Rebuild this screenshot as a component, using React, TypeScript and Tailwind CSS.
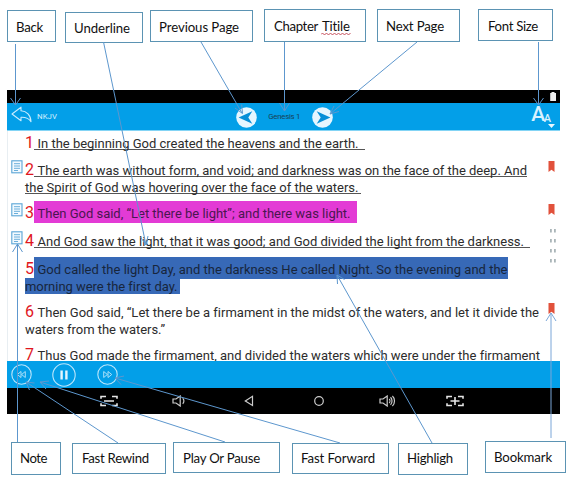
import { useLayoutEffect, useRef, useState } from 'react';
import type { ReactNode } from 'react';

/* Single line of text whose letter spacing is tuned to fill the given width. */
function FitText({ text, width, className = '' }: { text: string; width: number; className?: string }) {
  const ref = useRef<HTMLSpanElement>(null);
  const [spacing, setSpacing] = useState(0);
  useLayoutEffect(() => {
    if (ref.current) {
      const natural = ref.current.getBoundingClientRect().width;
      setSpacing((width - natural) / text.length);
    }
  }, [text, width]);
  return (
    <span ref={ref} className={`inline-block whitespace-nowrap ${className}`} style={{ letterSpacing: spacing }}>
      {text}
    </span>
  );
}

function Callout({ text, width, box, wavyText }: { text: string; width: number; box: string; wavyText?: string }) {
  return (
    <div className={`shrink-0 border border-[#5b93b3] bg-white font-[Lato,sans-serif] text-[13.2px] leading-[18px] text-[#111] ${box}`}>
      <FitText text={text} width={width} />
      {wavyText && (
        <>
          <span className="inline-block w-[4px]" />
          <span className="relative inline-block">
            <FitText text={wavyText} width={28} />
            <svg className="absolute -left-px top-[15px]" width="30" height="4" viewBox="0 0 30 4" fill="none">
              <path d="M0 2.5l1.5-1.5 2 2 2-2 2 2 2-2 2 2 2-2 2 2 2-2 2 2 2-2 2 2 2-2 2 2 2-2" stroke="#c0404d" strokeWidth=".9" />
            </svg>
          </span>
        </>
      )}
    </div>
  );
}

function NoteIcon() {
  return (
    <svg width="12" height="14" viewBox="0 0 12 14" fill="none" stroke="#5aa5d6">
      <rect x=".8" y=".8" width="10.2" height="12" fill="#f3faff" strokeWidth="1.1" />
      <path d="M3 3.7h6M3 6h6M3 8.3h6M3 10.5h4" strokeWidth=".9" />
    </svg>
  );
}

function BookmarkIcon() {
  return (
    <svg width="7" height="11" viewBox="0 0 7 11">
      <path d="M.5 0h6v11l-3-2.2-3 2.2z" fill="#e1513b" />
    </svg>
  );
}

type LineProps = { n?: number; text: string; width: number; body: string };

function Line({ n, text, width, body }: LineProps) {
  return (
    <div className="flex h-[17px] items-start">
      {n && <span className="w-[9px] shrink-0 text-[16px] leading-[16px] text-[#e0161e]">{n}</span>}
      <span className={`block shrink-0 whitespace-nowrap ${n ? 'pl-[3.5px]' : ''} ${body}`}>
        <FitText text={text} width={width} />
      </span>
    </div>
  );
}

function Verse({ lines, note, mark, gap }: { lines: LineProps[]; note?: boolean; mark?: boolean; gap: string }) {
  return (
    <div className={`flex ${gap}`}>
      <div className="-mt-[2px] h-4 w-[18px] shrink-0 pl-[3.5px]">{note && <NoteIcon />}</div>
      <div className="w-[520px] shrink-0">
        {lines.map((l) => (
          <Line key={l.text} {...l} />
        ))}
      </div>
      <div className="-mt-px h-3 w-[10px] shrink-0 pl-[3px]">{mark && <BookmarkIcon />}</div>
    </div>
  );
}

const rule = 'h-[15px] border-b border-[#555]';

function Reader() {
  return (
    <main className="relative h-[230px] overflow-hidden border-l border-[#e8eef2] bg-white pt-1 font-[Roboto,sans-serif] text-[13px] leading-[17px] text-[#2c2c2c]">
      <div className="-ml-px">
        <Verse gap="mb-[10px]" lines={[{ n: 1, text: 'In the beginning God created the heavens and the earth.', width: 321, body: `w-[331px] ${rule}` }]} />
        <Verse
          gap="mb-[9px]"
          note
          mark
          lines={[
            { n: 2, text: 'The earth was without form, and void; and darkness was on the face of the deep. And', width: 489.5, body: `w-[493px] ${rule}` },
            { text: 'the Spirit of God was hovering over the face of the waters.', width: 333.5, body: `w-[336px] ${rule}` },
          ]}
        />
        <Verse gap="mb-[11px]" note mark lines={[{ n: 3, text: 'Then God said, “Let there be light”; and there was light.', width: 313, body: 'w-[323px] h-[22px] -mt-1 pt-1 bg-[#e33bd5] text-[#4a1650]' }]} />
        <Verse gap="mb-[11px]" note lines={[{ n: 4, text: 'And God saw the light, that it was good; and God divided the light from the darkness.', width: 486.5, body: `w-[496px] ${rule}` }]} />
        <Verse
          gap="mb-[9px]"
          lines={[
            { n: 5, text: 'God called the light Day, and the darkness He called Night. So the evening and the', width: 470, body: 'w-[473.5px] h-[22px] -mt-1 pt-1 bg-[#3769b7] text-[#17263c]' },
            { text: 'morning were the first day.', width: 152, body: 'w-[155px] h-[16px] bg-[#3769b7] text-[#17263c]' },
          ]}
        />
        <Verse
          gap="mb-[9px]"
          mark
          lines={[
            { n: 6, text: 'Then God said, “Let there be a firmament in the midst of the waters, and let it divide the', width: 501, body: '' },
            { text: 'waters from the waters.”', width: 140, body: '' },
          ]}
        />
        <Verse gap="" lines={[{ n: 7, text: 'Thus God made the firmament, and divided the waters which were under the firmament', width: 501.5, body: '' }]} />
      </div>
      {/* drag handle that floats over the right edge */}
      <svg className="absolute left-[541px] top-[97px]" width="8" height="36" viewBox="0 0 8 36" fill="#aab5b8">
        {[1, 11, 21, 31].map((y) => (
          <g key={y}>
            <rect x="1" y={y} width="1.8" height="3.5" />
            <rect x="5" y={y} width="1.8" height="3.5" />
          </g>
        ))}
      </svg>
    </main>
  );
}

function PageButton({ flip }: { flip?: boolean }) {
  return (
    <svg className={flip ? '-scale-x-100' : ''} width="21" height="21" viewBox="0 0 21 21">
      <circle cx="10.5" cy="10.5" r="10.3" fill="#e6f6ff" />
      <path d="M2.600 10.500L16.300 4.300l-4 6.200 4 6.200z" fill="#078fd8" />
    </svg>
  );
}

function NavCell({ children, shift = '' }: { children: ReactNode; shift?: string }) {
  return <div className={`flex w-[69.2px] shrink-0 items-center justify-center ${shift}`}>{children}</div>;
}

function Tablet() {
  return (
    <section className="ml-[7px] flex h-[324px] w-[553px] flex-col">
      <div className="flex h-[13px] shrink-0 justify-end bg-black pr-[4px] pt-[2px]">
        <svg width="6" height="9" viewBox="0 0 6 9" fill="#eee">
          <path d="M1.5 0h3v1H6v8H.2V1h1.3z" />
        </svg>
      </div>
      <header className="flex h-[28px] shrink-0 border-b border-[#83d4f5] bg-[#039fe8]">
        <svg className="ml-[4px] mt-[3px]" width="22" height="18" viewBox="0 0 22 18" fill="none" stroke="#c9ecff" strokeWidth="1.1" strokeLinejoin="round">
          <path d="M1 8L10 1.2v3.6c5.600 .3 9.800 4.200 10 10.800-2.200-3.500-5.300-4.600-10-4.400v3.600z" />
        </svg>
        <span className="ml-[4px] mt-[9px] w-[28px] font-[Roboto,sans-serif] text-[7.800px] leading-[10px] text-[#d5f0ff]">
          <FitText text="NKJV" width={20} />
        </span>
        <div className="ml-[171px] mt-[3.5px] flex">
          <PageButton />
          <span className="w-[54.500px] pt-[5px] text-center font-[Roboto,sans-serif] text-[7.800px] leading-[10px] text-[#183f57]">
            <FitText text="Genesis 1" width={32} />
          </span>
          <PageButton flip />
        </div>
        <div className="ml-auto mt-px flex pr-[5px] font-[Roboto,sans-serif] text-[#d9f2ff]">
          <span className="text-[21px] font-medium leading-[21px] tracking-[-.5px]">A</span>
          <span className="-ml-[1px] pt-[9px] text-[11px] font-medium leading-[12px]">A</span>
          <svg className="-ml-[3px] mt-[20px]" width="7" height="4" viewBox="0 0 7 4">
            <path d="M0 0h7L3.500 4z" fill="#e8f7ff" />
          </svg>
        </div>
      </header>
      <Reader />
      <div className="flex h-[27px] shrink-0 items-center bg-[#039fe8] pl-[4px]">
        <svg width="21" height="21" viewBox="0 0 21 21" fill="none" stroke="#bce6fb">
          <circle cx="10.500" cy="10.500" r="9.700" strokeWidth="1.1" />
          <path d="M10 7.500v6l-3.700-3zM14.300 7.500v6l-3.700-3z" strokeWidth=".9" />
        </svg>
        <svg className="ml-[20px]" width="24" height="24" viewBox="0 0 24 24" fill="none" stroke="#bce6fb">
          <circle cx="12" cy="12" r="11.200" strokeWidth="1.1" />
          <path d="M9.600 7.500v9M14.400 7.500v9" stroke="#e3f6ff" strokeWidth="2.400" />
        </svg>
        <svg className="ml-[21px]" width="21" height="21" viewBox="0 0 21 21" fill="none" stroke="#bce6fb">
          <circle cx="10.500" cy="10.500" r="9.700" strokeWidth="1.1" />
          <path d="M6.700 7.500v6l3.700-3zM11 7.500v6l3.700-3z" strokeWidth=".9" />
        </svg>
      </div>
      <nav className="flex h-[26px] shrink-0 bg-black pl-[67.500px]">
        <NavCell>
          <svg width="18" height="12" viewBox="0 0 18 12" fill="none" stroke="#e5e5e5" strokeWidth="1.600">
            <path d="M6 1.500H1v2.300M12 1.500h5v2.300M1 8.200v2.300h5M17 8.200v2.300h-5M4 6h10" />
          </svg>
        </NavCell>
        <NavCell shift="pl-[2px]">
          <svg width="14" height="12" viewBox="0 0 14 12" fill="none" stroke="#ccc" strokeWidth="1.200">
            <path d="M1 4h3l4.200-3v10L4 8H1zM10.700 3.200c1.600 1.300 1.600 4.300 0 5.600" />
          </svg>
        </NavCell>
        <NavCell shift="pl-[4px]">
          <svg width="10" height="12" viewBox="0 0 10 12" fill="none" stroke="#ccc" strokeWidth="1.200">
            <path d="M8.500 1.300v9.200L1.300 5.900z" />
          </svg>
        </NavCell>
        <NavCell shift="pl-[4px]">
          <svg width="12" height="12" viewBox="0 0 12 12" fill="none" stroke="#ccc" strokeWidth="1.200">
            <circle cx="6" cy="6" r="4.300" />
          </svg>
        </NavCell>
        <NavCell shift="pl-[4px]">
          <svg width="17" height="12" viewBox="0 0 17 12" fill="none" stroke="#ccc" strokeWidth="1.200">
            <path d="M1 4h3l4.200-3v10L4 8H1zM10.200 4c1 1 1 3 0 4M11.500 2.200c2 1.800 2 5.800 0 7.600M13.400 1c2.800 2.500 2.800 7.500 0 10" />
          </svg>
        </NavCell>
        <NavCell>
          <svg width="18" height="12" viewBox="0 0 18 12" fill="none" stroke="#e5e5e5" strokeWidth="1.600">
            <path d="M6 1.500H1v2.300M12 1.500h5v2.300M1 8.200v2.300h5M17 8.200v2.300h-5M4.500 6h9M9 2v8" />
          </svg>
        </NavCell>
      </nav>
    </section>
  );
}

/* Leader lines that tie each callout to its control. */
function Leaders() {
  return (
    <svg className="pointer-events-none absolute inset-0" width="569" height="482" viewBox="0 0 569 482" fill="none" stroke="#5d97ce" strokeWidth="1">
      <path d="M15.500 44v61M10.500 98l5 7 5-7" />
      <path d="M103.500 42L146 245M140.500 237l5.500 8 2-9" />
      <path d="M201 42l41 71M235 108l7.500 5.500-.8-9" />
      <path d="M284.500 42v69M279.500 103l5 8 5-8" />
      <path d="M417 42l-87 72M339 111.500l-9 2.500 4-8" />
      <path d="M538.500 42v63M533.500 98l5 7 5-7" />
      <path d="M17.500 442V244M12.500 252l5-8 5 8" />
      <path d="M118 443L26 382M29.500 390L26 382l8.500 1" />
      <path d="M225 442L40 382M46 389l-6-7 9-1" />
      <path d="M340 443L115 378M121 384.500l-6-6.500 9-2" />
      <path d="M432 443L337 275M337.500 284l-.5-9 7.500 4.500" />
      <path d="M551 438V313M546 321l5-8 5 8" stroke="#7aa6d8" />
    </svg>
  );
}

export default function App() {
  return (
    <div className="relative flex h-[482px] w-[569px] flex-col overflow-hidden bg-white">
      <div className="flex h-[90px] shrink-0 items-start pl-[7px] pt-[9px]">
        <Callout text="Back" width={27} box="mt-px h-[32px] w-[49px] pl-[8px] pt-[7px]" />
        <Callout text="Underline" width={56} box="ml-[9px] mt-[3px] h-[31px] w-[78px] pl-[8px] pt-[6px]" />
        <Callout text="Previous Page" width={80} box="ml-[7px] mt-px h-[32px] w-[103px] pl-[8px] pt-[7px]" />
        <Callout text="Chapter" width={44} box="ml-[11px] h-[33px] w-[102px] whitespace-nowrap pl-[9px] pt-[7px]" wavyText="Titile" />
        <Callout text="Next Page" width={58} box="ml-[11px] h-[33px] w-[83px] pl-[8px] pt-[7px]" />
        <Callout text="Font Size" width={50} box="ml-[18px] h-[32px] w-[75px] pl-[9px] pt-[7px]" />
      </div>
      <Tablet />
      <div className="flex items-start pl-[11px] pt-[27px]">
        <Callout text="Note" width={27} box="mt-px h-[33px] w-[50px] pl-[8px] pt-[6px]" />
        <Callout text="Fast Rewind" width={67} box="ml-[11px] mt-[2px] h-[31px] w-[94px] pl-[9px] pt-[5px]" />
        <Callout text="Play Or Pause" width={77} box="ml-[7px] mt-px h-[31px] w-[107px] pl-[9px] pt-[6px]" />
        <Callout text="Fast Forward" width={74} box="ml-[12px] mt-[2px] h-[31px] w-[97px] pl-[8px] pt-[5px]" />
        <Callout text="Highligh" width={46} box="ml-[9px] mt-[2px] h-[32px] w-[70px] pl-[8px] pt-[5px]" />
        <Callout text="Bookmark" width={58} box="ml-[17px] h-[32px] w-[81px] pl-[8px] pt-[6px]" />
      </div>
      <Leaders />
    </div>
  );
}
